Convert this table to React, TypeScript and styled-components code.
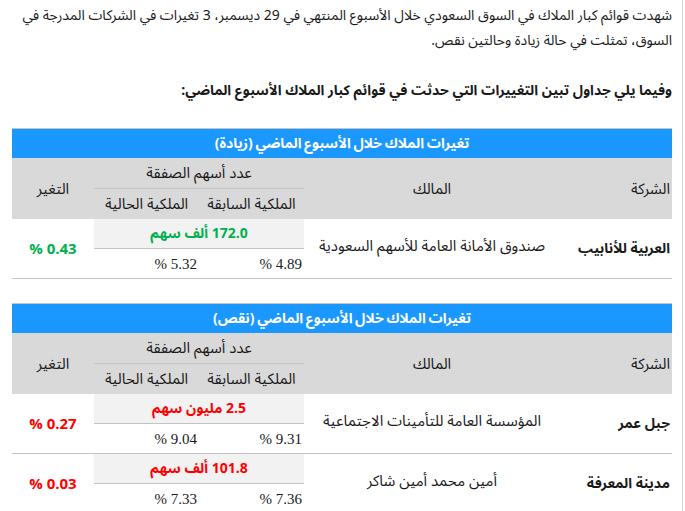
import styled, { createGlobalStyle } from "styled-components"

type Tone = "up" | "down"

type Row = {
    company: string
    owner: string
    deal: string
    before: string
    after: string
    change: string
}

const increases: Row[] = [
    {
        company: "العربية للأنابيب",
        owner: "صندوق الأمانة العامة للأسهم السعودية",
        deal: "172.0 ألف سهم",
        before: "4.89 %",
        after: "5.32 %",
        change: "0.43 %",
    },
]

const decreases: Row[] = [
    {
        company: "جبل عمر",
        owner: "المؤسسة العامة للتأمينات الاجتماعية",
        deal: "2.5 مليون سهم",
        before: "9.31 %",
        after: "9.04 %",
        change: "0.27 %",
    },
    {
        company: "مدينة المعرفة",
        owner: "أمين محمد أمين شاكر",
        deal: "101.8 ألف سهم",
        before: "7.36 %",
        after: "7.33 %",
        change: "0.03 %",
    },
]

const toneColors = {
    up: "#00b050",
    down: "#ff0000",
}

function ChangesTable({ title, rows, tone }: { title: string; rows: Row[]; tone: Tone }) {
    return (
        <Table>
            <colgroup>
                <col style={{ width: 112 }} />
                <col style={{ width: 256 }} />
                <col style={{ width: 105 }} />
                <col style={{ width: 105 }} />
                <col style={{ width: 82 }} />
            </colgroup>
            <thead>
                <tr>
                    <TitleCell colSpan={5}>{title}</TitleCell>
                </tr>
                <tr>
                    <HeadCell rowSpan={2} $align="right">الشركة</HeadCell>
                    <HeadCell rowSpan={2}>المالك</HeadCell>
                    <HeadCell colSpan={2} $split>عدد أسهم الصفقة</HeadCell>
                    <HeadCell rowSpan={2}>التغير</HeadCell>
                </tr>
                <tr>
                    <HeadCell>الملكية السابقة</HeadCell>
                    <HeadCell>الملكية الحالية</HeadCell>
                </tr>
            </thead>
            {rows.map((row, i) => (
                <tbody key={row.company}>
                    <tr>
                        <CompanyCell rowSpan={2} $first={i === 0}>{row.company}</CompanyCell>
                        <OwnerCell rowSpan={2} $first={i === 0}>{row.owner}</OwnerCell>
                        <DealCell colSpan={2} $tone={tone} $first={i === 0}>{row.deal}</DealCell>
                        <ChangeCell rowSpan={2} $tone={tone} $first={i === 0}>{row.change}</ChangeCell>
                    </tr>
                    <tr>
                        <PercentCell>{row.before}</PercentCell>
                        <PercentCell>{row.after}</PercentCell>
                    </tr>
                </tbody>
            ))}
        </Table>
    )
}

export default function App() {
    return (
        <>
            <GlobalStyle />
            <Page>
                <Paragraph>
                    شهدت قوائم كبار الملاك في السوق السعودي خلال الأسبوع المنتهي في 29 ديسمبر، 3 تغيرات في الشركات المدرجة في السوق، تمثلت في حالة زيادة وحالتين نقص.
                </Paragraph>
                <Paragraph $bold>
                    وفيما يلي جداول تبين التغييرات التي حدثت في قوائم كبار الملاك الأسبوع الماضي:
                </Paragraph>
                <ChangesTable title="تغيرات الملاك خلال الأسبوع الماضي (زيادة)" rows={increases} tone="up" />
                <ChangesTable title="تغيرات الملاك خلال الأسبوع الماضي (نقص)" rows={decreases} tone="down" />
            </Page>
        </>
    )
}

const GlobalStyle = createGlobalStyle`
    body{
        margin: 0;
        background: #fff;
    }
`
const Page = styled.div`
    box-sizing: border-box;
    width: 683px;
    min-height: 100vh;
    padding: 3px 10px 0 8px;
    border-right: 1px solid #d4d4d4;
    direction: rtl;
    font-family: "Noto Sans Arabic", "DejaVu Sans", sans-serif;
    color: #1a1a1a;
`
const Paragraph = styled.p<{ $bold?: boolean }>`
    margin: 0 0 25px;
    font-size: 14px;
    line-height: 25px;
    font-weight: ${p => p.$bold ? 700 : 400};
`
const Table = styled.table`
    width: 660px;
    border-collapse: collapse;
    table-layout: fixed;
    margin: 0 0 24px;
    border-top: 1px solid #c4c4c4;
    border-bottom: 1px solid #c4c4c4;
    font-size: 15px;
    line-height: 20px;
`
const TitleCell = styled.th`
    height: 29px;
    padding: 0;
    background: #1a98ff;
    color: #fff;
    font-size: 14px;
    font-weight: 700;
    word-spacing: -1px;
    text-align: center;
`
const HeadCell = styled.th<{ $align?: string; $split?: boolean }>`
    height: 30px;
    padding: 0 2px;
    background: #d9d9d9;
    font-weight: 400;
    text-align: ${p => p.$align || "center"};
    border-bottom: ${p => p.$split ? "1px solid #c4c4c4" : "none"};
`
const BodyCell = styled.td<{ $first?: boolean }>`
    padding: 0 2px;
    vertical-align: middle;
    border-top: ${p => p.$first ? "none" : "1px solid #c4c4c4"};
`
const CompanyCell = styled(BodyCell)`
    text-align: right;
    font-size: 14px;
    font-weight: 700;
`
const OwnerCell = styled(BodyCell)`
    text-align: center;
    padding-bottom: 5px;
`
const DealCell = styled(BodyCell)<{ $tone: Tone }>`
    height: 29px;
    text-align: center;
    font-size: 14px;
    font-weight: 700;
    background: #f2f2f2;
    color: ${p => toneColors[p.$tone]};
    border-bottom: 1px solid #c4c4c4;
`
const ChangeCell = styled(BodyCell)<{ $tone: Tone }>`
    text-align: center;
    font-weight: 700;
    color: ${p => toneColors[p.$tone]};
`
const PercentCell = styled.td`
    height: 29px;
    padding: 0 2px;
    text-align: right;
    font-family: "Liberation Serif", serif;
    font-size: 15px;
`
